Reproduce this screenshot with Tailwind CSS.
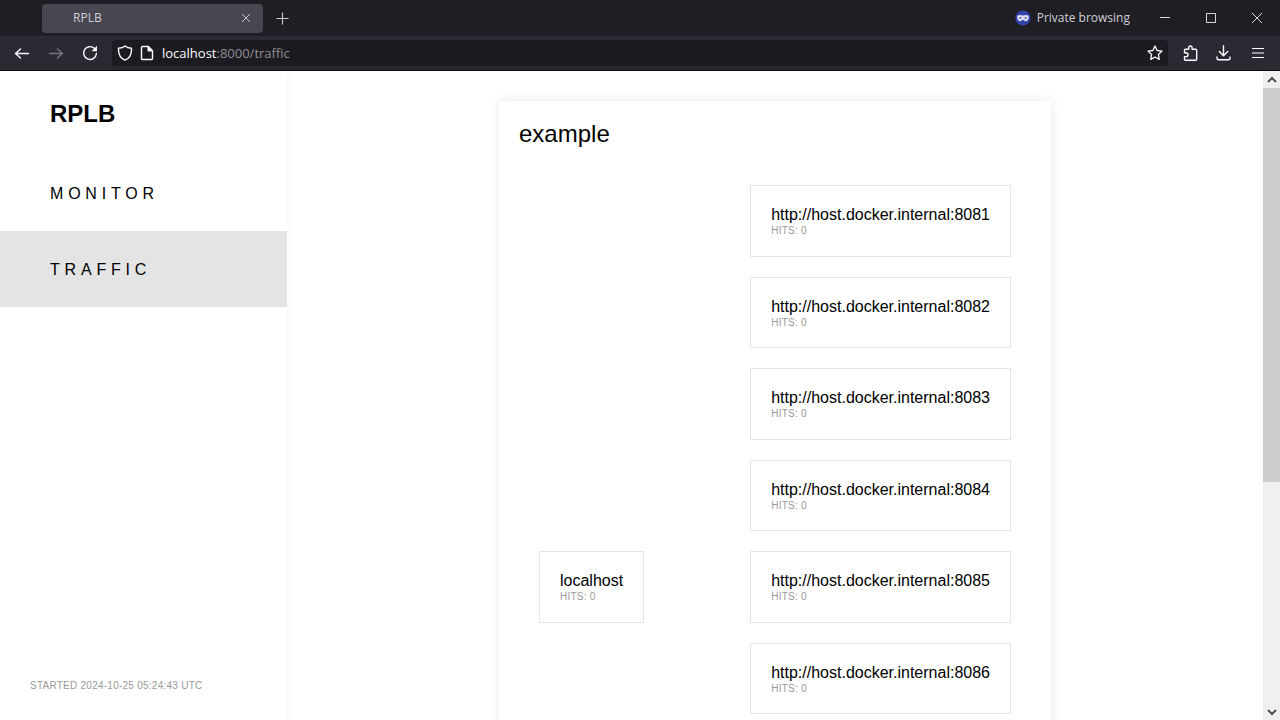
<!DOCTYPE html>
<html lang="en">
<head>
<meta charset="utf-8">
<meta name="viewport" content="width=device-width, initial-scale=1">
<title>RPLB</title>
<script src="https://cdn.jsdelivr.net/npm/@tailwindcss/browser@4"></script>
</head>
<body class="flex h-screen flex-col overflow-hidden bg-white font-['Liberation_Sans',Arial,sans-serif] text-black">

<!-- Browser chrome -->
<header class="shrink-0 border-b border-[#0c0c0d] bg-[#2b2a33] font-['Open_Sans',sans-serif] text-[#fbfbfe]">
  <div class="flex h-9 items-center bg-[#1f1e25] pl-[42px]">
    <div class="flex h-[29px] w-[221px] items-center justify-between rounded-sm bg-[#484650] pr-[9px] pl-[31px]">
      <span class="text-xs text-[#d0cfd6]">RPLB</span>
      <button aria-label="Close tab" class="flex size-4 items-center justify-center">
        <svg class="size-3 text-[#c9c3cc]" viewBox="0 0 12 12" fill="none" stroke="currentColor" stroke-width="1"><path d="M2 2l8 8M10 2l-8 8"/></svg>
      </button>
    </div>
    <button aria-label="New tab" class="ml-[11px] flex size-4 items-center justify-center">
      <svg class="size-4 text-[#d0cfd6]" viewBox="0 0 16 16" fill="none" stroke="currentColor" stroke-width="1.1"><path d="M8.5 2.500v12M2.500 8.500h12"/></svg>
    </button>
    <div class="ml-auto flex items-center gap-1.5">
      <svg class="size-4" viewBox="0 0 16 16"><circle cx="8" cy="8" r="7.600" fill="#3442ab"/><path fill="#dcdcec" fill-rule="evenodd" d="M2.300 6C3.500 4.600 5.600 4.600 8 5.500c2.400-.9 4.500-.9 5.700.5.300 2.600-.6 5.200-2.800 5.200-1.500 0-2-1.400-2.900-1.400s-1.400 1.400-2.900 1.400C2.900 11.200 2 8.600 2.300 6zM4 7.900c.8 1 2 1 2.800.2-.8-1-2-1-2.800-.2zM9.200 8.100c.8.8 2 .8 2.800-.2-.8-.8-2-.8-2.800.2z"/></svg>
      <span class="text-xs text-[#d0cfd6]">Private browsing</span>
    </div>
    <div class="ml-3 flex text-[#d8d7dd]">
      <button aria-label="Minimize" class="flex h-9 w-[46px] items-center justify-center"><svg class="size-3" viewBox="0 0 12 12" fill="none" stroke="currentColor"><path d="M1 5.500h10"/></svg></button>
      <button aria-label="Maximize" class="flex h-9 w-[46px] items-center justify-center"><svg class="size-3" viewBox="0 0 12 12" fill="none" stroke="currentColor"><path d="M1.500 1.500h9v9h-9z"/></svg></button>
      <button aria-label="Close window" class="flex h-9 w-[46px] items-center justify-center"><svg class="size-3" viewBox="0 0 12 12" fill="none" stroke="currentColor"><path d="M1 1l10 10M11 1L1 11"/></svg></button>
    </div>
  </div>
  <div class="flex h-[34px] items-center pr-3.5 pl-3.5">
    <button aria-label="Back" class="size-4"><svg class="size-4" viewBox="0 0 16 16" fill="none" stroke="currentColor" stroke-width="1.400" stroke-linecap="round" stroke-linejoin="round"><path d="M14.500 8.500h-13M6.500 4L1.500 8.500l5 4.500"/></svg></button>
    <button aria-label="Forward" class="ml-[18px] size-4 text-[#77767c]"><svg class="size-4" viewBox="0 0 16 16" fill="none" stroke="currentColor" stroke-width="1.400" stroke-linecap="round" stroke-linejoin="round"><path d="M1.500 8.500h13M9.500 4l5 4.500-5 4.500"/></svg></button>
    <button aria-label="Reload" class="ml-[18px] size-4"><svg class="size-4" viewBox="0 0 16 16" fill="none" stroke="currentColor" stroke-width="1.400" stroke-linecap="round"><path d="M12.600 3.600A6.400 6.400 0 1 0 14.400 8.500"/><path fill="currentColor" stroke="none" d="M15 .8v5.400H9.600z"/></svg></button>
    <div class="ml-3.5 flex h-[26px] grow items-center gap-1.5 rounded-sm bg-[#1c1b22] pr-[5px] pl-[5px]">
      <svg class="size-4 shrink-0" viewBox="0 0 16 16" fill="none" stroke="currentColor" stroke-width="1.400" stroke-linejoin="round"><path d="M8 .9C9.700 2.400 12 3.100 14.500 3.300c.3 5.200-1.900 9.900-6.500 11.900C3.400 13.200 1.200 8.500 1.500 3.300 4 3.100 6.300 2.400 8 .9z"/></svg>
      <svg class="size-4 shrink-0" viewBox="0 0 16 16" fill="none" stroke="currentColor" stroke-width="1.400" stroke-linejoin="round"><path d="M3.500 1.500h5.800l4.200 4.200v7.800a1 1 0 0 1-1 1h-9a1 1 0 0 1-1-1v-11a1 1 0 0 1 1-1z"/><path fill="currentColor" d="M9.200 1.700V5.800h4.100z"/></svg>
      <a href="#traffic" class="pt-0.5 pl-px text-[13px] text-[#8f8e96]"><span class="text-[#fbfbfe]">localhost</span>:8000/traffic</a>
      <button aria-label="Bookmark" class="ml-auto size-4"><svg class="size-4" viewBox="0 0 16 16" fill="none" stroke="currentColor" stroke-width="1.300" stroke-linejoin="round"><path d="M8 1l2.100 4.500 4.900.6-3.600 3.400.9 4.900L8 12l-4.300 2.400.9-4.900L1 6.100l4.900-.6z"/></svg></button>
    </div>
    <button aria-label="Extensions" class="ml-3.5 size-4"><svg class="size-4" viewBox="0 0 16 16" fill="none" stroke="currentColor" stroke-width="1.400" stroke-linejoin="round"><path d="M2.500 7V5.200a1 1 0 0 1 1-1h3.200V2.700a1.700 1.700 0 0 1 3.400 0v1.500h3.600a1 1 0 0 1 1 1v9a1 1 0 0 1-1 1H3.500a1 1 0 0 1-1-1v-2.600h1.600a1.900 1.900 0 0 0 0-3.800H2.500z"/></svg></button>
    <button aria-label="Downloads" class="ml-[17px] size-4"><svg class="size-4" viewBox="0 0 16 16" fill="none" stroke="currentColor" stroke-width="1.400" stroke-linecap="round" stroke-linejoin="round"><path d="M8.500 .8v9.700M4.300 6.500l4.200 4.200 4.200-4.200M2 12v1.300a1.500 1.500 0 0 0 1.500 1.500h10a1.500 1.500 0 0 0 1.500-1.500V12"/></svg></button>
    <button aria-label="Menu" class="ml-[19px] size-4"><svg class="size-4" viewBox="0 0 16 16" fill="none" stroke="currentColor" stroke-width="1.200"><path d="M2 3.500h12M2 8h12M2 12.500h12"/></svg></button>
  </div>
</header>

<!-- Page -->
<div class="flex min-h-0 grow">
  <aside class="flex w-[287px] shrink-0 flex-col justify-between shadow-[0_0_10px_rgba(0,0,0,0.06)]">
    <div>
      <h1 class="px-[50px] pt-[29px] pb-[27px] text-2xl leading-7 font-bold">RPLB</h1>
      <nav class="flex flex-col leading-4 tracking-[0.3em]">
        <a href="#monitor" class="px-[50px] pt-[31px] pb-[29px]">MONITOR</a>
        <a href="#traffic" class="bg-[#e4e4e4] px-[50px] pt-[31px] pb-[29px]">TRAFFIC</a>
      </nav>
    </div>
    <p class="px-[30px] pb-7 text-[10px] leading-3 tracking-wide text-[#999]">STARTED 2024-10-25 05:24:43 UTC</p>
  </aside>

  <main class="flex grow items-start justify-center overflow-hidden pt-[30px]">
    <section class="px-5 pt-[19px] pb-5 shadow-[0_0_10px_rgba(0,0,0,0.1)]">
      <h2 class="text-2xl leading-7">example</h2>
      <div class="flex items-center gap-[106px] px-5 pt-[37px] pb-10">
        <div class="border border-[#e4e4e4] px-5 pt-5 pb-[18px]">
          <p class="leading-[18px]">localhost</p>
          <p class="text-[10px] leading-[14px] tracking-wide text-[#999]">HITS: 0</p>
        </div>
        <!-- Nine equal rows; the list continues below the fold -->
        <ul class="grid min-h-[804px] grid-rows-9 gap-5">
          <li class="border border-[#e4e4e4] px-5 pt-5"><p class="leading-[18px]">http://host.docker.internal:8081</p><p class="text-[10px] leading-[14px] tracking-wide text-[#999]">HITS: 0</p></li>
          <li class="border border-[#e4e4e4] px-5 pt-5"><p class="leading-[18px]">http://host.docker.internal:8082</p><p class="text-[10px] leading-[14px] tracking-wide text-[#999]">HITS: 0</p></li>
          <li class="border border-[#e4e4e4] px-5 pt-5"><p class="leading-[18px]">http://host.docker.internal:8083</p><p class="text-[10px] leading-[14px] tracking-wide text-[#999]">HITS: 0</p></li>
          <li class="border border-[#e4e4e4] px-5 pt-5"><p class="leading-[18px]">http://host.docker.internal:8084</p><p class="text-[10px] leading-[14px] tracking-wide text-[#999]">HITS: 0</p></li>
          <li class="border border-[#e4e4e4] px-5 pt-5"><p class="leading-[18px]">http://host.docker.internal:8085</p><p class="text-[10px] leading-[14px] tracking-wide text-[#999]">HITS: 0</p></li>
          <li class="border border-[#e4e4e4] px-5 pt-5"><p class="leading-[18px]">http://host.docker.internal:8086</p><p class="text-[10px] leading-[14px] tracking-wide text-[#999]">HITS: 0</p></li>
        </ul>
      </div>
    </section>
  </main>

  <div class="flex w-[17px] shrink-0 flex-col bg-[#f0f0f0] text-[#505058]">
    <button aria-label="Scroll up" class="flex h-[17px] shrink-0 items-center justify-center"><svg class="h-2 w-3" viewBox="0 0 12 8" fill="none" stroke="currentColor" stroke-width="2"><path d="M2 6l4-4 4 4"/></svg></button>
    <div class="grow">
      <div class="h-[64%] bg-[#cdcdcd]"></div>
    </div>
    <button aria-label="Scroll down" class="flex h-[17px] shrink-0 items-center justify-center"><svg class="h-2 w-3" viewBox="0 0 12 8" fill="none" stroke="currentColor" stroke-width="2"><path d="M2 2l4 4 4-4"/></svg></button>
  </div>
</div>
</body>
</html>
